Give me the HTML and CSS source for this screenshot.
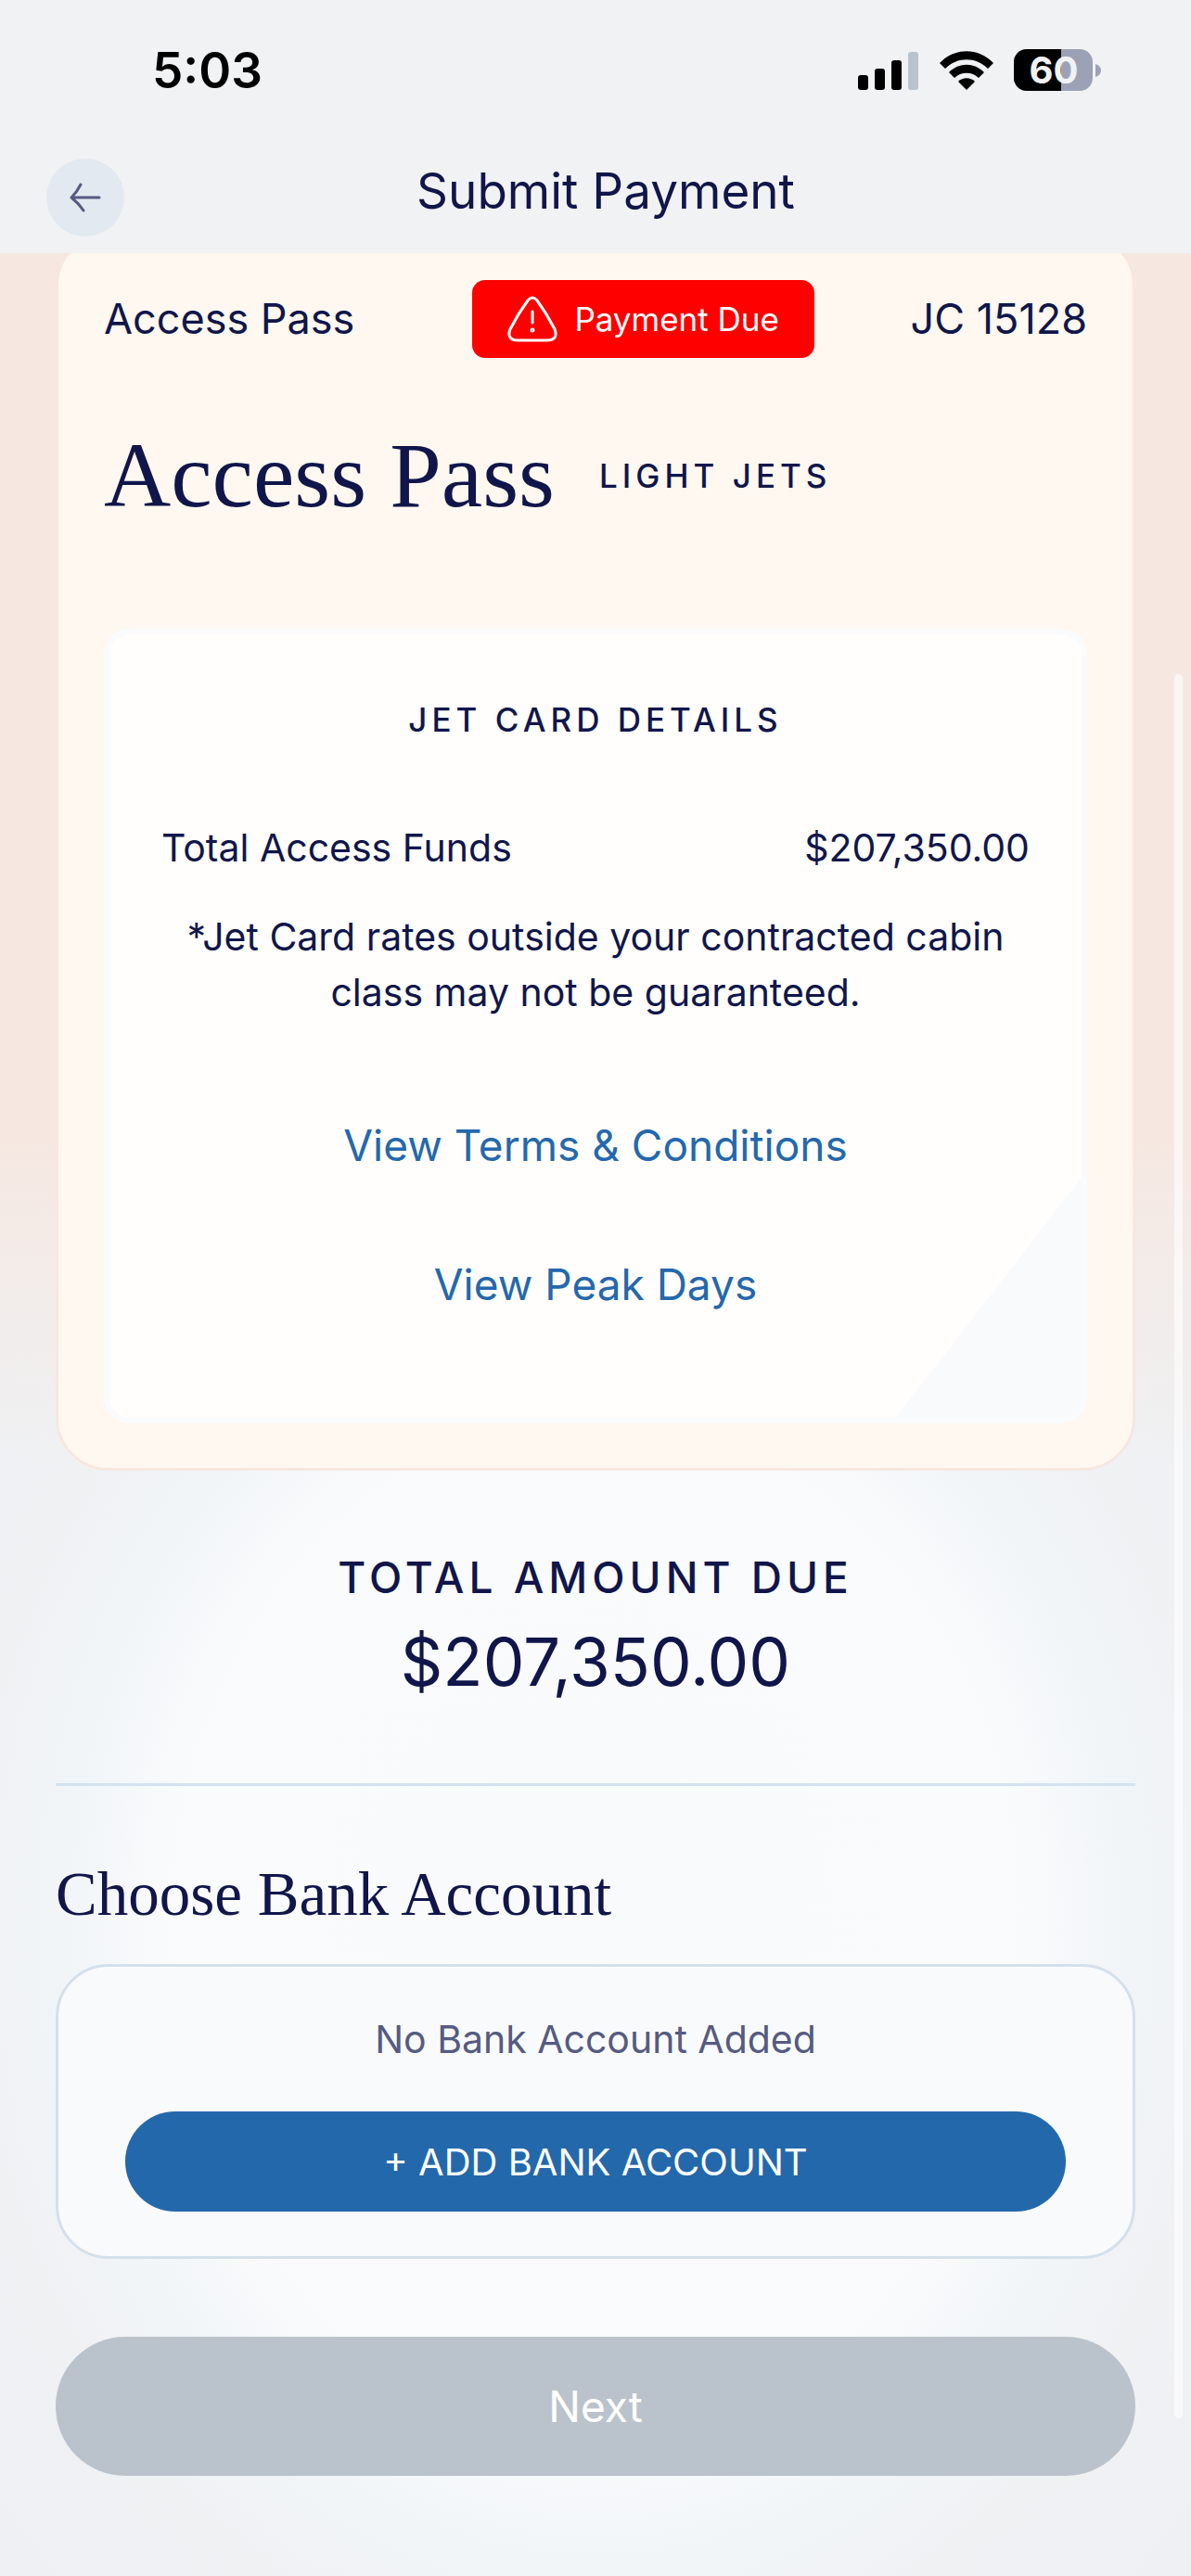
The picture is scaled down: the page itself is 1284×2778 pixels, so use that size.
FILE: index.html
```html
<!DOCTYPE html>
<html lang="en">
<head>
    <meta charset="UTF-8">
    <meta name="viewport" content="width=device-width, initial-scale=1.0">
    <title>Submit Payment</title>
    <link rel="stylesheet" href="styles.css">
</head>
<body>
<header class="top-bar">
    <div class="status-bar">
        <span class="status-time">5:03</span>
        <div class="status-icons">
            <svg width="66" height="42" viewBox="0 0 66 42" aria-hidden="true">
                <rect x="0" y="26" width="11" height="16" rx="3"/>
                <rect x="18" y="19" width="11" height="23" rx="3"/>
                <rect x="36" y="10" width="11" height="32" rx="3"/>
                <rect x="54" y="1" width="11" height="41" rx="3" fill="#bac3cb"/>
            </svg>
            <svg width="58" height="42" viewBox="0 0 58 42" aria-hidden="true">
                <path d="M0 13 C16 -4 42 -4 58 13 L52 19 C39 6 19 6 6 19 Z"/>
                <path d="M10 23 C21 12 37 12 48 23 L42 29 C35 22 23 22 16 29 Z"/>
                <path d="M20 33 C25 28 33 28 38 33 L29 42 Z"/>
            </svg>
            <svg class="battery" width="95" height="46" viewBox="0 0 95 46" aria-label="Battery 60%">
                <rect x="0" y="0" width="85" height="45" rx="14" fill="#9ca2b5"/>
                <path d="M14 0 H51 V45 H14 A14 14 0 0 1 0 31 V14 A14 14 0 0 1 14 0 Z"/>
                <path d="M88 16 Q94 18 94 23 Q94 28 88 30 Z" fill="#9ca2b5"/>
                <text class="battery-text" x="43" y="37" text-anchor="middle">60</text>
            </svg>
        </div>
    </div>
    <nav class="nav-bar">
        <button class="back-button" type="button" aria-label="Back">
            <svg width="36" height="34" viewBox="0 0 36 34" fill="none" stroke="#555b80" stroke-width="3" stroke-linecap="round" stroke-linejoin="round" aria-hidden="true">
                <path d="M33 17 H3 M13 3 C10 9 8 12 3 17 C8 21 12 25 16 31"/>
            </svg>
        </button>
        <h1 class="page-title">Submit Payment</h1>
    </nav>
</header>

<main class="content">
    <section class="pass-card">
        <div class="pass-header">
            <span class="pass-text">Access Pass</span>
            <span class="due-badge">
                <svg width="54" height="50" viewBox="0 0 54 50" fill="none" stroke="#fff" stroke-width="3" stroke-linecap="round" stroke-linejoin="round" aria-hidden="true">
                    <path d="M22 5 Q27 -1 32 5 Q43 20 51 36 Q55 47 44 48 H10 Q-1 47 3 36 Q11 20 22 5 Z"/>
                    <path d="M27 17 V29"/>
                    <circle cx="27" cy="37" r="1"/>
                </svg>
                Payment Due
            </span>
            <span class="pass-text">JC 15128</span>
        </div>
        <div class="pass-title">
            <h2>Access Pass</h2>
            <span class="caps">Light Jets</span>
        </div>

        <!-- Jet card details -->
        <div class="details">
            <h3 class="caps">Jet Card Details</h3>
            <div class="funds">
                <span>Total Access Funds</span>
                <span>$207,350.00</span>
            </div>
            <p class="note">*Jet Card rates outside your contracted cabin class may not be guaranteed.</p>
            <a class="terms-link" href="#">View Terms &amp; Conditions</a>
            <a class="peak-link" href="#">View Peak Days</a>
        </div>
    </section>

    <section class="total">
        <h2>Total Amount Due</h2>
        <p>$207,350.00</p>
    </section>

    <!-- Bank account -->
    <section class="bank">
        <h2>Choose Bank Account</h2>
        <div class="bank-box">
            <p>No Bank Account Added</p>
            <button class="add-button" type="button">+ ADD BANK ACCOUNT</button>
        </div>
    </section>

    <button class="next-button" type="button" disabled>Next</button>
</main>
<div class="scroll-thumb"></div>
</body>
</html>
```

FILE: styles.css
```css
* {
    box-sizing: border-box;
}

body {
    margin: 0;
    min-height: 100vh;
    display: flex;
    flex-direction: column;
    position: relative;
    background: #f1f2f3;
    color: #10164a;
    font-family: Inter, "Open Sans", sans-serif;
    font-size: 41px;
    line-height: 60px;
}

h1, h2, h3, p {
    margin: 0;
    font-weight: 400;
}

button {
    border: none;
    font-family: inherit;
    cursor: pointer;
}

.top-bar {
    position: relative;
    z-index: 1;
    background: #f1f2f3;
    padding-bottom: 18px;
}

.status-bar {
    display: flex;
    justify-content: space-between;
    align-items: center;
    padding: 46px 96px 65px 164px;
}

.status-time {
    color: #000;
    font-size: 53px;
    font-weight: 600;
}

.status-icons {
    display: flex;
    align-items: center;
    gap: 22px;
}

.battery {
    overflow: visible;
}

.battery-text {
    fill: #f1f2f3;
    font-size: 40px;
    font-weight: 700;
}

.nav-bar {
    display: flex;
    align-items: flex-start;
    padding: 0 112px 0 50px;
}

.back-button {
    display: flex;
    align-items: center;
    justify-content: center;
    width: 84px;
    height: 84px;
    padding: 0;
    border-radius: 50%;
    background: #e2e9f0;
}

.page-title {
    flex: 1;
    text-align: center;
    font-size: 53px;
    line-height: 70px;
}

.content {
    flex: 1;
    padding: 0 60px 108px;
    background:
        linear-gradient(#f6e8e1 0, #f6e8e1 38%, rgba(246, 232, 225, 0) 52%),
        radial-gradient(900px 1080px at 50% 72%, #f9fafc 0, #fafbfc 50%, #f1f5f8 64%, #f0f1f3 76%, #edf0f3 100%);
}

/* The card is scrolled a little way under the top bar */
.pass-card {
    margin-top: -22px;
    padding: 48px 49px;
    border: 3px solid #f7e7df;
    border-radius: 57px;
    background: #fff8f1;
}

.pass-header {
    display: flex;
    align-items: center;
}

.pass-text {
    font-size: 45px;
}

.due-badge {
    display: flex;
    align-items: center;
    gap: 18px;
    height: 84px;
    margin: 0 auto 0 127px;
    padding: 0 38px;
    border-radius: 14px;
    background: #ff0000;
    color: #fff;
    font-size: 35px;
}

.pass-title {
    display: flex;
    align-items: center;
    gap: 48px;
    margin: 67px 0 105px;
}

.pass-title h2 {
    font-family: "Liberation Serif", serif;
    font-size: 100px;
    line-height: 120px;
}

.caps {
    font-size: 35px;
    font-weight: 500;
    line-height: 48px;
    letter-spacing: 5px;
    text-transform: uppercase;
}

.details {
    display: flex;
    flex-direction: column;
    align-items: center;
    padding: 74px 62px 120px;
    border-radius: 28px;
    background:
        linear-gradient(to bottom right, transparent 50%, #f8fafc 50%) right bottom / 211px 273px no-repeat,
        #fffefc;
    box-shadow: inset 0 0 0 6px #f9fbfc;
}

.funds {
    display: flex;
    justify-content: space-between;
    align-self: stretch;
    margin: 84px 0 36px;
}

.note {
    text-align: center;
}

.details a {
    color: #2468ac;
    font-size: 46px;
    text-decoration: none;
}

.details .terms-link {
    margin: 105px 0 90px;
}

.total {
    padding: 85px 0 86px;
    border-bottom: 3px solid #d4e2ee;
    text-align: center;
}

.total h2 {
    font-size: 46px;
    font-weight: 500;
    letter-spacing: 5px;
    text-transform: uppercase;
}

.total p {
    margin-top: 16px;
    font-size: 71px;
    line-height: 90px;
}

.bank h2 {
    margin: 76px 0 36px;
    font-family: "Liberation Serif", serif;
    font-size: 67px;
    line-height: 80px;
}

.bank-box {
    padding: 48px 72px;
    border: 3px solid #d4e0ea;
    border-radius: 57px;
    background: #f9fafc;
    text-align: center;
}

.bank-box p {
    color: #555b80;
}

.add-button {
    width: 100%;
    height: 108px;
    margin-top: 48px;
    border-radius: 54px;
    background: #2468ac;
    color: #fff;
    font-size: 40px;
}

.next-button {
    width: 100%;
    height: 150px;
    margin-top: 84px;
    border-radius: 75px;
    background: #bac3cb;
    color: #fff;
    font-size: 46px;
}

/* Scroll indicator over the page edge */
.scroll-thumb {
    position: absolute;
    top: 727px;
    right: 9px;
    bottom: 170px;
    width: 9px;
    border-radius: 5px;
    background: rgba(255, 255, 255, 0.6);
}
```
